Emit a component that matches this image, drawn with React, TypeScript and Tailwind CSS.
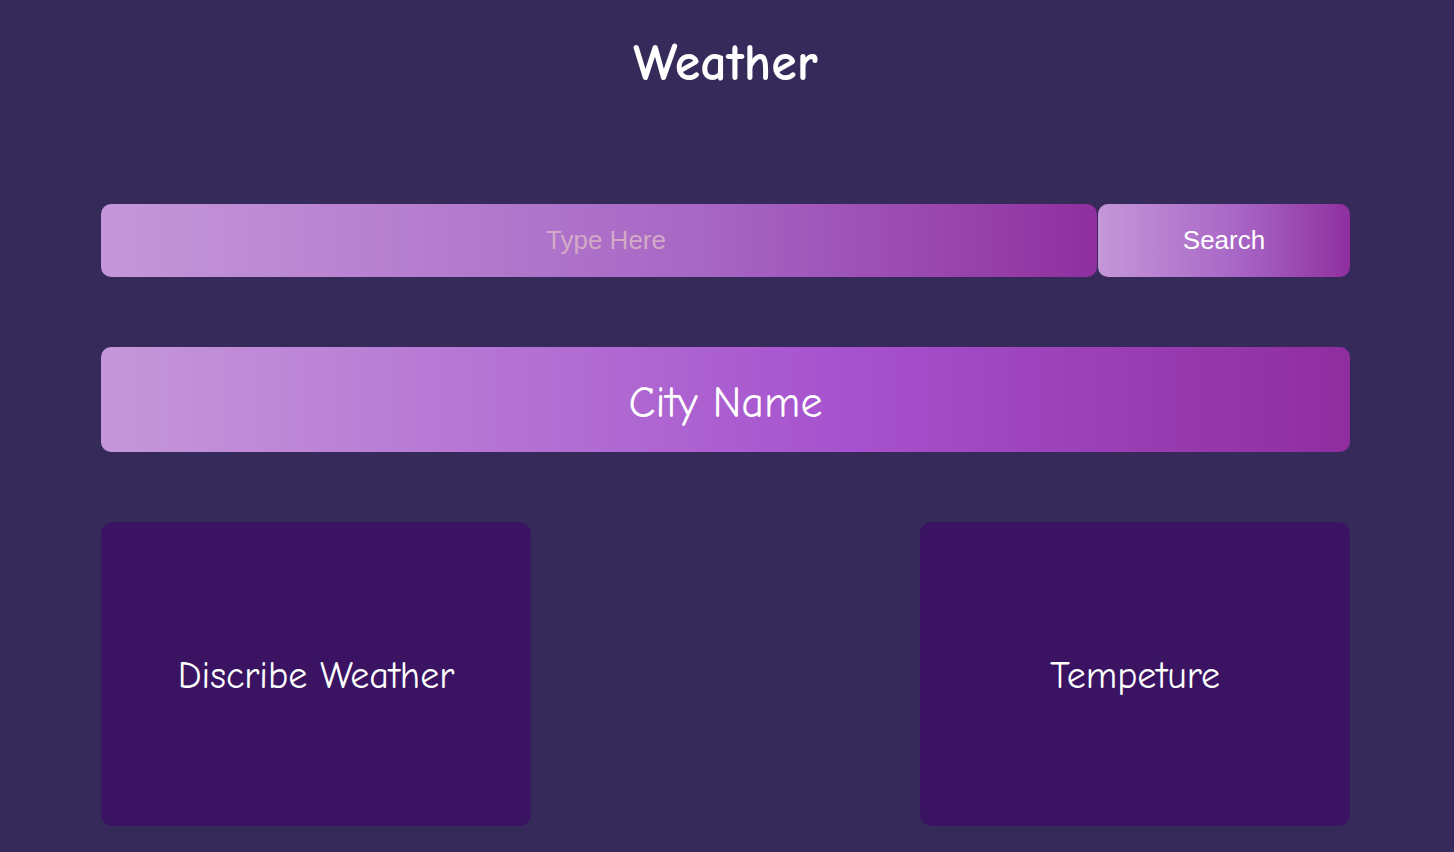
import React, { useState } from 'react';

const comic = "font-['Comic_Sans_MS','Comic_Neue','Noto_Sans',sans-serif]";

const InfoCard: React.FC<{ label: string }> = ({ label }) => (
  <div className="w-[430px] h-[304px] rounded-[12px] bg-[#3a1463] flex items-center justify-center pt-[4px]">
    <span className={`${comic} text-[38px] text-white`}>{label}</span>
  </div>
);

const App: React.FC = () => {
  const [city, setCity] = useState('');

  return (
    <div className="min-h-[852px] bg-[#352a5a] pl-[101px] pr-[104px] pb-[26px]">
      <div className="h-[126px] flex items-center justify-center">
        <h1 className={`${comic} text-[52px] font-bold text-white`}>Weather</h1>
      </div>

      <div className="mt-[78px] flex h-[73px]">
        <input
          value={city}
          onChange={(e) => setCity(e.target.value)}
          placeholder="Type Here"
          className="flex-1 h-full rounded-[10px] bg-gradient-to-r from-[#c597d9] via-[#a767c5] via-60% to-[#8f2e9f] pl-[14px] text-center text-[26px] text-white placeholder:text-[#d3aac6] font-['Liberation_Sans',Arial,sans-serif] outline-none"
        />
        <button
          type="button"
          className="ml-px w-[252px] h-full rounded-[10px] bg-gradient-to-r from-[#c597d9] via-[#a866c6] via-55% to-[#8f2e9f] text-[26px] text-white font-['Liberation_Sans',Arial,sans-serif]"
        >
          Search
        </button>
      </div>

      <div className="mt-[70px] h-[105px] rounded-[10px] bg-gradient-to-r from-[#c597d9] via-[#a651ce] via-60% to-[#8f2d9f] flex items-center justify-center pt-[6px]">
        <span className={`${comic} text-[44px] text-white`}>City Name</span>
      </div>

      <div className="mt-[70px] flex justify-between">
        <InfoCard label="Discribe Weather" />
        <InfoCard label="Tempeture" />
      </div>
    </div>
  );
};

export default App;
